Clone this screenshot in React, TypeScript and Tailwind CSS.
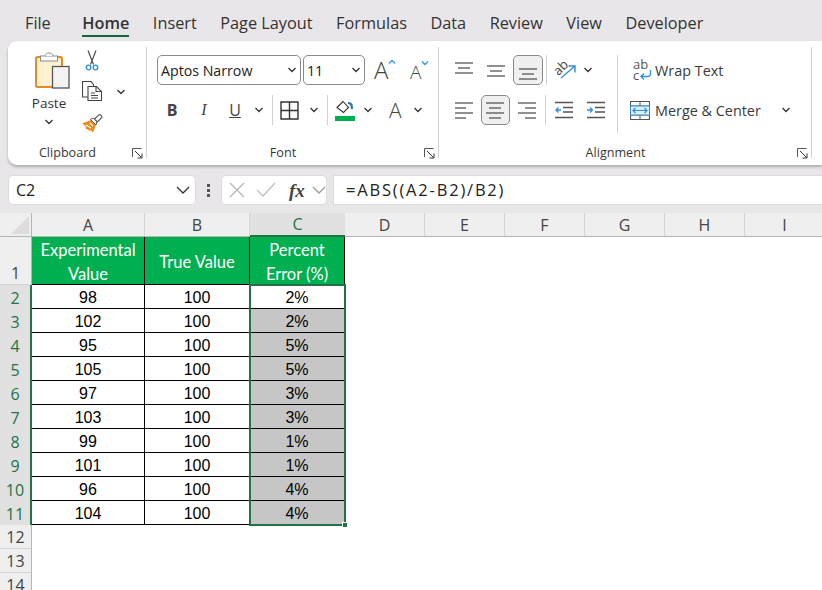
import React from "react";

const tabs = ["File", "Home", "Insert", "Page Layout", "Formulas", "Data", "Review", "View", "Developer"];
const rows = [
  [98, 100, "2%"],
  [102, 100, "2%"],
  [95, 100, "5%"],
  [105, 100, "5%"],
  [97, 100, "3%"],
  [103, 100, "3%"],
  [99, 100, "1%"],
  [101, 100, "1%"],
  [96, 100, "4%"],
  [104, 100, "4%"],
];

const Chevron = ({ className = "" }: { className?: string }) => (
  <svg width="10" height="6" viewBox="0 0 10 6" fill="none" stroke="#333" strokeWidth="1.3" className={className}>
    <path d="M1.5 1l3.5 3.5L8.500 1" />
  </svg>
);

const BigChevron = ({ color, className = "" }: { color: string; className?: string }) => (
  <svg width="14" height="8" viewBox="0 0 14 8" fill="none" stroke={color} strokeWidth="1.3" className={className}>
    <path d="M1 1l6 6 6-6" />
  </svg>
);

// horizontal lines used by the alignment buttons, [x1, x2, y]
const Lines = ({ lines }: { lines: number[][] }) => (
  <svg width="20" height="20" viewBox="0 0 20 20" stroke="#555" strokeWidth="1.3">
    {lines.map((l, i) => (
      <path key={i} d={`M${l[0]} ${l[2]}H${l[1]}`} />
    ))}
  </svg>
);

const Launcher = () => (
  <svg width="11" height="11" viewBox="0 0 11 11" fill="none" stroke="#555" strokeWidth="1">
    <path d="M.5 9V.5H9.500" />
    <path d="M3 3l6.500 6.500M10 5.500V10H5.500" stroke="#333" />
  </svg>
);

const GroupLabel = ({ text }: { text: string }) => (
  <div className="mt-auto mb-[-2px] grid grid-cols-[1fr_auto_1fr] items-center h-[14px] pr-[3px] text-[12.600px] leading-[14px] text-[#3a3a3a]">
    <span />
    <span className="mr-[16px]">{text}</span>
    <span className="justify-self-end">
      <Launcher />
    </span>
  </div>
);

const Combo = ({ text, width }: { text: string; width: string }) => (
  <div className={`flex items-center justify-between h-[30px] pl-[3px] pr-[3px] bg-white border border-[#8a8a8a] rounded-[5px] text-[14.200px] text-[#222] ${width}`}>
    <span className="mt-[1px]">{text}</span>
    <Chevron />
  </div>
);

const Divider = ({ className = "" }: { className?: string }) => <div className={`w-px bg-[#d2d2d2] ${className}`} />;

const PasteIcon = () => (
  <svg width="35" height="38" viewBox="0 0 35 38" className="block">
    <rect x="1" y="6" width="26" height="30" rx="1.500" fill="#fdf1cf" stroke="#e58b2b" strokeWidth="2" />
    <rect x="5.500" y="5" width="17" height="5" fill="#fff" stroke="#8b8b8b" />
    <path d="M10 5c0-4 8-4 8 0" fill="#fff" stroke="#8b8b8b" />
    <rect x="17.500" y="15.500" width="16.500" height="21.500" fill="#f3f3f3" stroke="#555" strokeWidth="1.300" />
  </svg>
);

const ScissorsIcon = () => (
  <svg width="20" height="21" viewBox="0 0 20 21" fill="none" className="block">
    <path d="M6 .5l5.500 14M14 .5L8.500 14.500" stroke="#444" strokeWidth="1.100" />
    <circle cx="6.500" cy="17.500" r="2.300" stroke="#2f8fd8" strokeWidth="1.300" />
    <circle cx="13.500" cy="17.500" r="2.300" stroke="#2f8fd8" strokeWidth="1.300" />
  </svg>
);

const CopyIcon = () => (
  <svg width="20" height="20" viewBox="0 0 20 20" fill="#fff" stroke="#444" strokeWidth="1.100" className="block">
    <path d="M.5.500H9l2.500 3V16H.500z" />
    <path d="M6 5.500h8.500l5 5v9H6z" />
    <path d="M14 5.500v5h5M9 12h4M9 14.500h7M9 17h7" fill="none" />
  </svg>
);

const BrushIcon = () => (
  <svg width="21" height="19" viewBox="0 0 21 19" className="block">
    <path d="M0 9.500l9-3.500 5 5-3 7.500-2.500-2.500-1.500 1-1-2-2 .5-.5-3.500z" fill="#ee8a1e" />
    <path d="M4 11l5 3M8 9l3 3" stroke="#fff" strokeWidth="1.100" />
    <path d="M8.500 5.500l3-1.500 3.500 3.500-1 3.500z" fill="#fff" stroke="#555" strokeWidth="1" />
    <path d="M12.500 5L17 .8c1-.8 3.500 1.500 2.800 2.700L15.500 8z" fill="#fff" stroke="#555" strokeWidth="1.100" />
  </svg>
);

const BordersIcon = () => (
  <svg width="19" height="19" viewBox="0 0 19 19" fill="none" stroke="#333" strokeWidth="1.400" className="block">
    <path d="M1 1h17v17H1zM9.500 1v17M1 9.500h17" />
  </svg>
);

const FillIcon = () => (
  <div className="flex flex-col items-center w-[20px]">
    <svg width="18" height="14" viewBox="0 0 18 14" fill="none" className="block">
      <path d="M1 7.500L7 1.500l5.500 6-5 5z" stroke="#333" strokeWidth="1.100" />
      <path d="M12 3c3 0 4 2 4 6" stroke="#2676b8" strokeWidth="2.200" />
      <path d="M13.500 2.500l3 2" stroke="#2676b8" />
    </svg>
    <div className="w-[20px] h-[5px] mt-[2px] bg-[#00b050]" />
  </div>
);

const GrowIcon = ({ up }: { up: boolean }) => (
  <div className="flex items-start">
    <span className={`text-[#444] font-light leading-none ${up ? "text-[24px]" : "text-[19px] mt-[4px]"}`}>A</span>
    <svg width="8" height="6" viewBox="0 0 8 6" fill="none" stroke="#2f9be0" strokeWidth="1.400" className="mt-[1px]">
      <path d={up ? "M1 4.500l3-3 3 3" : "M1 1.500l3 3 3-3"} />
    </svg>
  </div>
);

const OrientIcon = () => (
  <svg width="26" height="24" viewBox="0 0 26 24" fill="none" className="block overflow-visible">
    <path d="M9 20L23 8M16.500 8H23V14.500" stroke="#2f8fd8" strokeWidth="1.400" />
    <text x="9" y="14" fontSize="13" fill="#444" textAnchor="middle" transform="rotate(-45 9 10)" fontFamily="Open Sans">ab</text>
  </svg>
);

const IndentIcon = ({ out }: { out: boolean }) => (
  <svg width="19" height="18" viewBox="0 0 19 18" fill="none" stroke="#555" strokeWidth="1.300" className="block">
    <path d="M1 1.500h18M9 6.500h10M9 11h10M1 16.500h18" />
    <path d={out ? "M7 9H1.500M4.500 6.500L2 9l2.500 2.500" : "M1 9h5.500M4 6.500L6.500 9 4 11.500"} stroke="#2f8fd8" />
  </svg>
);

const WrapIcon = () => (
  <div className="relative w-[18px] h-[22px] text-[13px] leading-[11px] text-[#555]">
    <div>ab</div>
    <div>c</div>
    <svg width="12" height="10" viewBox="0 0 12 10" fill="none" stroke="#2f8fd8" strokeWidth="1.300" className="absolute right-[-1px] bottom-[1px]">
      <path d="M10.500 0v3.500c0 2-1 3-3 3H1M4 3.500l-3 3 3 3" />
    </svg>
  </div>
);

const MergeIcon = () => (
  <svg width="20" height="19" viewBox="0 0 20 19" fill="none" className="block">
    <rect x=".5" y=".5" width="19" height="18" fill="#fff" stroke="#555" />
    <path d="M.5 5h19M.5 14h19M10 .5V5M10 14v4.500" stroke="#555" />
    <rect x=".5" y="5" width="19" height="9" fill="#dbeefb" stroke="#2f8fd8" />
    <path d="M3 9.500h14M5.500 7L3 9.500 5.500 12M14.500 7L17 9.500 14.500 12" stroke="#2f8fd8" strokeWidth="1.200" />
  </svg>
);

const ActiveBox = ({ children, active }: { children: React.ReactNode; active?: boolean }) => (
  <div className={`flex items-center justify-center w-[30px] h-[30px] rounded-[5px] ${active ? "bg-[#f0f0f0] border border-[#8a8a8a]" : ""}`}>
    {children}
  </div>
);

const Ribbon = () => (
  <div className="flex h-[124px] ml-[8px] pt-[6px] bg-white rounded-l-[9px] shadow-[0_2px_3px_rgba(0,0,0,0.25)] text-[#333]">
    {/* Clipboard */}
    <div className="flex flex-col w-[139px] h-[111px] border-r border-[#d2d2d2]">
      <div className="flex pt-[3px]">
        <div className="flex flex-col items-center w-[50px] ml-[16px]">
          <div className="ml-[7px] mt-[1px]">
            <PasteIcon />
          </div>
          <span className="mt-[5px] text-[13.500px] leading-[18px]">Paste</span>
          <Chevron className="mt-[7px]" />
        </div>
        <div className="flex flex-col w-[20px] ml-[8px] gap-[10px]">
          <ScissorsIcon />
          <CopyIcon />
          <div className="mt-[3px]">
            <BrushIcon />
          </div>
        </div>
        <Chevron className="ml-[14px] mt-[39px]" />
      </div>
      <GroupLabel text="Clipboard" />
    </div>

    {/* Font */}
    <div className="flex flex-col w-[292px] h-[111px] border-r border-[#d2d2d2]">
      <div className="flex items-center gap-[2px] ml-[10px] mt-[8px] h-[30px]">
        <Combo text="Aptos Narrow" width="w-[144px]" />
        <Combo text="11" width="w-[62px]" />
        <div className="ml-[7px] w-[33px]">
          <GrowIcon up />
        </div>
        <div className="ml-[1px]">
          <GrowIcon up={false} />
        </div>
      </div>
      <div className="flex items-center ml-[10px] mt-[10px] h-[30px] text-[#444]">
        <span className="w-[30px] text-center text-[16px] font-bold">B</span>
        <span className="w-[30px] ml-[2px] text-center text-[16px] italic font-['Liberation_Serif',serif]">I</span>
        <span className="w-[30px] ml-[1px] text-center text-[16px] underline">U</span>
        <Chevron className="ml-[4px]" />
        <Divider className="h-[30px] ml-[8px]" />
        <div className="ml-[7px]">
          <BordersIcon />
        </div>
        <Chevron className="ml-[10px]" />
        <Divider className="h-[30px] ml-[8px]" />
        <div className="ml-[7px]">
          <FillIcon />
        </div>
        <Chevron className="ml-[8px]" />
        <span className="ml-[16px] text-[21px] font-light leading-none">A</span>
        <Chevron className="ml-[11px]" />
      </div>
      <GroupLabel text="Font" />
    </div>

    {/* Alignment */}
    <div className="flex flex-col w-[373px] h-[111px] border-r border-[#d2d2d2]">
      <div className="flex mt-[8px]">
        <div className="flex flex-col gap-[10px] ml-[10px] w-[161px]">
          <div className="flex items-center gap-[2px] h-[30px]">
            <ActiveBox><Lines lines={[[1, 19, 3], [4, 16, 8], [1, 19, 13]]} /></ActiveBox>
            <ActiveBox><Lines lines={[[1, 19, 6], [4, 16, 11], [1, 19, 16]]} /></ActiveBox>
            <ActiveBox active><Lines lines={[[1, 19, 9], [4, 16, 14], [1, 19, 19]]} /></ActiveBox>
            <Divider className="h-[30px] mx-[1px]" />
            <div className="flex justify-center w-[30px]"><OrientIcon /></div>
            <Chevron className="ml-[1px]" />
          </div>
          <div className="flex items-center gap-[2px] h-[30px]">
            <ActiveBox><Lines lines={[[1, 19, 3], [1, 12, 8], [1, 19, 13], [1, 12, 18]]} /></ActiveBox>
            <ActiveBox active><Lines lines={[[1, 19, 3], [4, 16, 8], [1, 19, 13], [4, 16, 18]]} /></ActiveBox>
            <ActiveBox><Lines lines={[[1, 19, 3], [8, 19, 8], [1, 19, 13], [8, 19, 18]]} /></ActiveBox>
            <Divider className="h-[30px] mx-[1px]" />
            <div className="flex justify-center w-[30px]"><IndentIcon out /></div>
            <div className="flex justify-center w-[30px]"><IndentIcon out={false} /></div>
          </div>
        </div>
        <Divider className="h-[78px] ml-[7px]" />
        <div className="flex flex-col gap-[10px] ml-[12px] text-[14.400px] text-[#3a3a3a]">
          <div className="flex items-center h-[30px] ml-[3px]">
            <WrapIcon />
            <span className="ml-[4px] mt-[1px]">Wrap Text</span>
          </div>
          <div className="flex items-center h-[30px]">
            <MergeIcon />
            <span className="ml-[5px] mt-[1px] w-[126px]">Merge &amp; Center</span>
            <Chevron />
          </div>
        </div>
      </div>
      <GroupLabel text="Alignment" />
    </div>
  </div>
);

const FormulaBar = () => (
  <div className="flex items-center h-[48px] pl-[8px] pt-[2px] text-[#222]">
    <div className="flex items-center justify-between w-[188px] h-[30px] pl-[7px] pr-[5px] bg-white border border-[#dcdcdc] rounded-[5px] text-[16px]">
      <span>C2</span>
      <BigChevron color="#333" />
    </div>
    <div className="flex flex-col gap-[2px] ml-[11px]">
      <div className="w-[3px] h-[3px] bg-[#555]" />
      <div className="w-[3px] h-[3px] bg-[#555]" />
      <div className="w-[3px] h-[3px] bg-[#555]" />
    </div>
    <div className="flex items-center w-[106px] h-[30px] ml-[11px] pl-[7px] bg-white border border-[#dcdcdc] rounded-[5px]">
      <svg width="16" height="16" viewBox="0 0 16 16" fill="none" stroke="#b5b5b5" strokeWidth="1.300"><path d="M1 1l14 14M15 1L1 15" /></svg>
      <svg width="20" height="16" viewBox="0 0 20 16" fill="none" stroke="#c0c0c0" strokeWidth="1.300" className="ml-[11px]"><path d="M1 8l6 6L19 1" /></svg>
      <span className="ml-[13px] text-[19px] leading-none italic font-bold text-[#444] font-['Liberation_Serif',serif]">fx</span>
      <BigChevron color="#999" className="ml-[7px]" />
    </div>
    <div className="flex items-center flex-1 h-[30px] ml-[6px] pl-[12px] bg-white border border-[#dcdcdc] border-r-0 text-[16.500px] tracking-[1.800px]">
      =ABS((A2-B2)/B2)
    </div>
  </div>
);

const colHead = "flex items-center justify-center shrink-0 h-full border-r border-[#d4d4d4] text-[16px] text-[#444]";
const headCell = "flex items-center justify-center h-[48px] pt-[3px] border-r border-b border-black";
const cell = "flex items-center justify-center h-[24px] pt-[2px] leading-[20px] border-r border-b border-black";

const Sheet = () => (
  <div className="relative">
    {/* column headers */}
    <div className="flex h-[24px] bg-[#efefef] border-b border-[#b4b4b4]">
      <div className="relative shrink-0 w-[32px] h-full border-r border-[#b4b4b4]">
        <div className="absolute right-[2px] bottom-[2px] w-0 h-0 border-l-[18px] border-l-transparent border-b-[18px] border-b-[#dcdcdc]" />
      </div>
      <div className={`w-[113px] ${colHead}`}>A</div>
      <div className={`w-[105px] ${colHead}`}>B</div>
      <div className="flex items-center justify-center shrink-0 w-[95px] h-[24px] bg-[#e1e1e1] border-b-2 border-[#217346] text-[16px] text-[#217346]">C</div>
      {["D", "E", "F", "G", "H", "I"].map((c) => (
        <div key={c} className={`w-[80px] ${colHead}`}>{c}</div>
      ))}
    </div>

    {/* header row */}
    <div className="flex h-[48px]">
      <div className="flex items-end justify-center shrink-0 w-[32px] leading-[22px] bg-[#efefef] border-r border-[#b4b4b4] border-b border-b-[#d4d4d4] text-[16px] text-[#444]">1</div>
      <div className="grid grid-cols-[113px_105px_95px] bg-[#00b050] text-white text-[16.500px] leading-[24px] text-center font-['Lato',sans-serif]">
        <div className={headCell}>Experimental<br />Value</div>
        <div className={headCell}>True Value</div>
        <div className={headCell}>Percent<br />Error (%)</div>
      </div>
    </div>

    {/* data rows */}
    {rows.map((r, i) => (
      <div key={i} className="flex h-[24px]">
        <div className="flex items-center justify-center shrink-0 w-[32px] pt-[1px] leading-[20px] bg-[#e1e1e1] border-r-2 border-[#217346] text-[16px] text-[#217346]">{i + 2}</div>
        <div className="grid grid-cols-[113px_105px_95px] text-[16px] text-center text-black font-['Liberation_Sans',sans-serif]">
          <div className={cell}>{r[0]}</div>
          <div className={cell}>{r[1]}</div>
          <div className={`${cell} ${i === 0 ? "bg-white" : "bg-[#c6c6c6]"}`}>{r[2]}</div>
        </div>
      </div>
    ))}

    {/* empty rows */}
    {[12, 13, 14].map((n) => (
      <div key={n} className="flex items-center justify-center w-[32px] h-[24px] pt-[1px] leading-[20px] bg-[#efefef] border-r border-b border-r-[#b4b4b4] border-b-[#d4d4d4] text-[16px] text-[#444]">{n}</div>
    ))}

    {/* selection outline */}
    <div className="absolute left-[249px] top-[71px] w-[97px] h-[242px] border-2 border-[#217346] pointer-events-none">
      <div className="absolute right-[-4px] bottom-[-4px] w-[6px] h-[6px] bg-[#217346] border border-white" />
    </div>
  </div>
);

const App = () => {
  return (
    <div className="w-[822px] h-[590px] overflow-hidden bg-white font-['Open_Sans',sans-serif]">
      <div className="bg-[#e8e6e8]">
        <div className="flex gap-[23.500px] h-[41px] pl-[25px] pt-[10px] text-[16.300px] leading-[26px] text-[#333]">
          {tabs.map((t) => (
            <div key={t} className={t === "Home" ? "ml-[8px] h-[27px] font-semibold border-b-[2px] border-[#0f6b3c]" : ""}>{t}</div>
          ))}
        </div>
        <Ribbon />
        <FormulaBar />
      </div>
      <Sheet />
    </div>
  );
};

export default App;
